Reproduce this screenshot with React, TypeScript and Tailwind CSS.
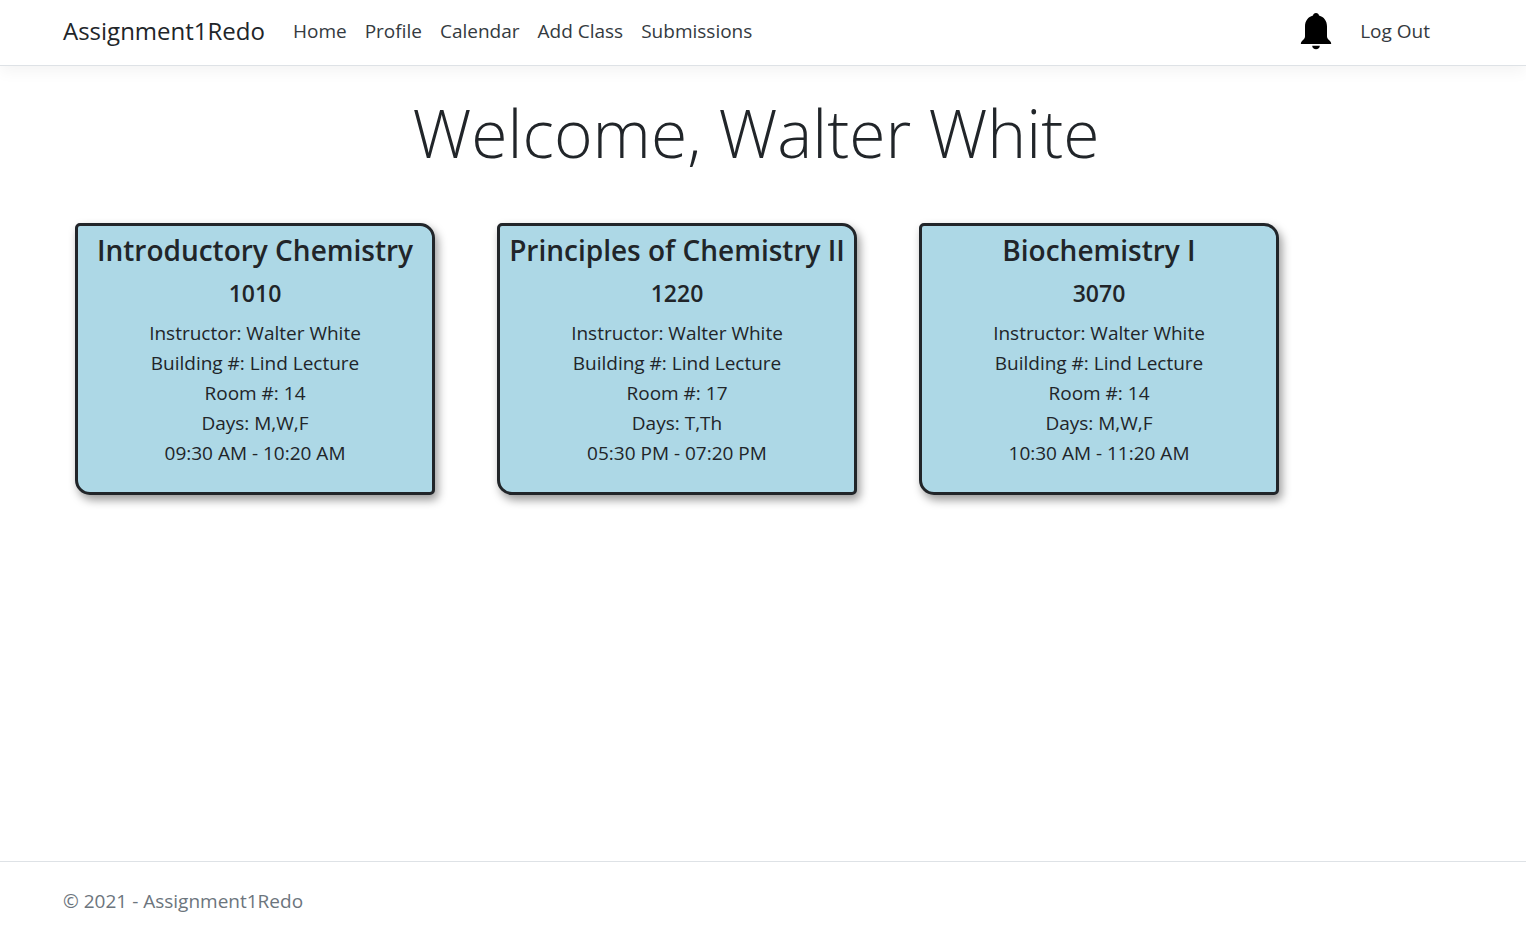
const links = ["Home", "Profile", "Calendar", "Add Class", "Submissions"];

type Course = {
  title: string;
  number: string;
  building: string;
  room: string;
  days: string;
  time: string;
};

const courses: Course[] = [
  { title: "Introductory Chemistry", number: "1010", building: "Lind Lecture", room: "14", days: "M,W,F", time: "09:30 AM - 10:20 AM" },
  { title: "Principles of Chemistry II", number: "1220", building: "Lind Lecture", room: "17", days: "T,Th", time: "05:30 PM - 07:20 PM" },
  { title: "Biochemistry I", number: "3070", building: "Lind Lecture", room: "14", days: "M,W,F", time: "10:30 AM - 11:20 AM" },
];

function BellIcon() {
  return (
    <svg width="32" height="38" viewBox="0 0 32 38" fill="#000" aria-hidden="true">
      <path d="M16 1C14.300 1 13.200 2 13 3.600C8 5 5 9 5 14.500V24.500C5 26.500 3.500 27.500 1.800 29.200Q.8 30.200.8 32H31.200Q31.200 30.200 30.200 29.200C28.500 27.500 27 26.500 27 24.500V14.500C27 9 24 5 19 3.600C18.800 2 17.700 1 16 1Z" />
      <path d="M12.200 33.800h7.600c0 2-1.700 3.400-3.800 3.400S12.200 35.800 12.200 33.800Z" />
    </svg>
  );
}

function CourseCard({ course }: { course: Course }) {
  return (
    <article className="w-[360px] rounded-tl-[5px] rounded-tr-[15px] rounded-br-[5px] rounded-bl-[15px] border-3 border-[#212529] bg-[#add8e6] pt-[6px] pb-6 text-center shadow-[3px_5px_10px_rgba(0,0,0,0.4)]">
      <h2 className="text-[28px] leading-9 font-semibold whitespace-nowrap">{course.title}</h2>
      <h3 className="mt-2 text-[23px] leading-[34px] font-semibold">{course.number}</h3>
      <div className="mt-2 leading-[30px]">
        <p>Instructor: Walter White</p>
        <p>Building #: {course.building}</p>
        <p>Room #: {course.room}</p>
        <p>Days: {course.days}</p>
        <p>{course.time}</p>
      </div>
    </article>
  );
}

export default function App() {
  return (
    <div className="flex min-h-screen flex-col bg-white font-['Open_Sans','Noto_Sans',sans-serif] text-[19px] text-[#212529]">
      <header className="border-b border-[#dee2e6] px-[63px] shadow-[0_5px_15px_rgba(0,0,0,0.05)]">
        <nav className="flex h-[65px] items-center pb-[3px]">
          <a href="#" className="mr-7 text-2xl">Assignment1Redo</a>
          <div className="flex gap-[18px] text-[#343a40]">
            {links.map((link) => (
              <a key={link} href="#">{link}</a>
            ))}
          </div>
          <div className="mr-[33px] ml-auto flex items-center gap-7">
            <button type="button" aria-label="Notifications">
              <BellIcon />
            </button>
            <a href="#" className="text-[#343a40]">Log Out</a>
          </div>
        </nav>
      </header>
      <main className="flex-1 px-[75px]">
        <h1 className="mt-6 mr-[14px] text-center text-[66px] leading-[84px] font-light">Welcome, Walter White</h1>
        <div className="mt-[49px] flex flex-wrap gap-x-[62px] gap-y-10">
          {courses.map((course) => (
            <CourseCard key={course.number} course={course} />
          ))}
        </div>
      </main>
      <footer className="h-[73px] border-t border-[#dee2e6] px-[63px] pt-6 leading-[30px] text-[#6c757d]">
        © 2021 - Assignment1Redo
      </footer>
    </div>
  );
}
